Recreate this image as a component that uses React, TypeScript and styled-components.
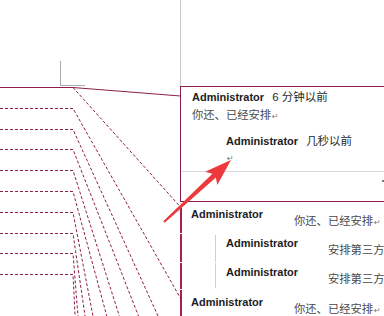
import React from "react";
import styled, { createGlobalStyle } from "styled-components";

const MAROON = "#8c1d4e";
const THREAD_RED = "#a8214f";

const Global = createGlobalStyle`
  html, body { margin: 0; padding: 0; background: #fff; }
  body { font-family: "Liberation Sans", "Noto Sans CJK SC", sans-serif; }
`;

const Screen = styled.div`
  position: relative;
  width: 384px;
  height: 316px;
  overflow: hidden;
  background: #fff;
  display: flex;
`;

const DocArea = styled.div`
  width: 180px;
  flex: none;
  box-sizing: border-box;
  padding: 61px 0 0 60px;
  display: flex;
  flex-direction: column;
`;

const CropMark = styled.div`
  width: 25px;
  height: 25px;
  box-sizing: border-box;
  border-left: 1px solid #ababab;
  border-bottom: 1px solid #ababab;
`;

const Pane = styled.div`
  flex: 1;
  min-width: 0;
  display: flex;
  flex-direction: column;
`;

const MarginGap = styled.div`
  height: 86px;
  flex: none;
  border-left: 1px solid #c9c9c9;
`;

const Balloon = styled.div`
  height: 116px;
  flex: none;
  box-sizing: border-box;
  border: 1px solid ${MAROON};
  border-right: none;
  display: flex;
  flex-direction: column;
`;

const BalloonBody = styled.div`
  height: 85px;
  box-sizing: border-box;
  border-bottom: 1px solid #dadada;
  padding: 3px 0 0 11px;
  display: flex;
  flex-direction: column;
`;

const Line = styled.div<{ $mt?: number; $ml?: number }>`
  margin-top: ${(p) => p.$mt ?? 0}px;
  margin-left: ${(p) => p.$ml ?? 0}px;
  line-height: 14px;
  white-space: nowrap;
  display: flex;
  align-items: baseline;
`;

const Author = styled.span<{ $w?: number }>`
  font-family: "Liberation Sans", sans-serif;
  font-weight: bold;
  font-size: 11px;
  color: #1c1c1c;
  ${(p) => (p.$w ? `width: ${p.$w}px; flex: none;` : "")}
`;

const Meta = styled.span`
  font-family: "Liberation Sans", "Noto Sans CJK SC", sans-serif;
  font-size: 11.5px;
  color: #2a2a2a;
  margin-left: 8px;
`;

const Body = styled.span`
  font-family: "Noto Sans CJK SC", sans-serif;
  font-size: 11.3px;
  color: #4a4a4a;
`;

const Ret = styled.span`
  font-family: "DejaVu Sans", sans-serif;
  font-size: 8px;
  color: #777;
  margin-left: 1px;
`;

const BalloonFooter = styled.div`
  flex: 1;
  display: flex;
  justify-content: flex-end;
  align-items: flex-start;
`;

const MenuDot = styled.span`
  width: 2px;
  height: 2px;
  margin-top: 8px;
  background: #777;
`;

const Thread = styled.div`
  margin-top: 6px;
  display: flex;
  flex-direction: column;
  gap: 1px;
`;

const Row = styled.div<{ $h?: number; $pt: number; $reply?: boolean }>`
  ${(p) => (p.$h ? `height: ${p.$h}px;` : "flex: 1;")}
  flex-shrink: 0;
  box-sizing: border-box;
  border-left: 2px solid ${THREAD_RED};
  padding: ${(p) => p.$pt}px 0 0 ${(p) => (p.$reply ? 33 : 9)}px;
  display: flex;
  align-items: flex-start;
  white-space: nowrap;
`;

const Guide = styled.span<{ $top: number; $bottom: number }>`
  align-self: stretch;
  margin-top: ${(p) => p.$top}px;
  margin-bottom: ${(p) => p.$bottom}px;
  margin-right: 10px;
  border-left: 1px solid #cfcfcf;
`;

const RowAuthor = styled(Author)`
  line-height: 12px;
`;

const RowText = styled.span`
  margin-top: 5px;
  line-height: 14px;
  font-family: "Noto Sans CJK SC", sans-serif;
  font-size: 11.3px;
  color: #4a4a4a;
`;

const Overlay = styled.svg`
  position: absolute;
  left: 0;
  top: 0;
  pointer-events: none;
`;

const anchors: [number, number][] = [
  [108, 1.77],
  [129, 2.2],
  [149, 2.55],
  [170, 3.15],
  [191, 3.7],
  [212, 5.2],
  [233, 6.9],
  [253, 12.6],
  [274, 20],
];

function leader(y: number, s: number) {
  const xEnd = Math.min(181, 73 + (330 - y) / s);
  const yEnd = y + (xEnd - 73) * s;
  return `M0 ${y + 0.5} H73 L${xEnd.toFixed(1)} ${yEnd.toFixed(1)}`;
}

// red callout arrow: tail (165,221) -> tip (231,160)
function arrowPoints() {
  const tip = [231, 160];
  const tail = [164, 222];
  const len = Math.hypot(tip[0] - tail[0], tip[1] - tail[1]);
  const d = [(tip[0] - tail[0]) / len, (tip[1] - tail[1]) / len];
  const n = [-d[1], d[0]];
  const headLen = 27;
  const headHalf = 9;
  const base = [tip[0] - d[0] * headLen, tip[1] - d[1] * headLen];
  const neck = [base[0] + d[0] * 4, base[1] + d[1] * 4];
  const p = (c: number[], k: number) => `${(c[0] + n[0] * k).toFixed(1)},${(c[1] + n[1] * k).toFixed(1)}`;
  return [
    p(tail, -1),
    p(neck, -2.6),
    p(base, -headHalf),
    `${tip[0]},${tip[1]}`,
    p(base, headHalf),
    p(neck, 2.6),
    p(tail, 1),
  ].join(" ");
}

function Connectors() {
  return (
    <Overlay width={384} height={316} viewBox="0 0 384 316">
      <g fill="none" stroke={MAROON} strokeWidth={1}>
        <path d="M0 87.5 H73 L180.5 96" />
        <g strokeDasharray="3 2">
          <path d="M73 87.5 L180.5 207" />
          {anchors.map(([y, s]) => (
            <path key={y} d={leader(y, s)} />
          ))}
        </g>
      </g>
      <polygon fill="#ec3a3c" points={arrowPoints()} />
    </Overlay>
  );
}

export default function App() {
  return (
    <Screen>
      <Global />
      <DocArea>
        <CropMark />
      </DocArea>
      <Pane>
        <MarginGap />
        <Balloon>
          <BalloonBody>
            <Line>
              <Author>Administrator</Author>
              <Meta>6 分钟以前</Meta>
            </Line>
            <Line $mt={3}>
              <Body>你还、已经安排</Body>
              <Ret>↵</Ret>
            </Line>
            <Line $mt={10} $ml={34}>
              <Author>Administrator</Author>
              <Meta>几秒以前</Meta>
            </Line>
            <Line $ml={34} $mt={4}>
              <Ret>↵</Ret>
            </Line>
          </BalloonBody>
          <BalloonFooter>
            <MenuDot />
          </BalloonFooter>
        </Balloon>
        <Thread>
          <Row $h={25} $pt={0}>
            <RowAuthor $w={103}>Administrator</RowAuthor>
            <RowText>
              你还、已经安排<Ret>↵</Ret>
            </RowText>
          </Row>
          <Row $h={28} $pt={3} $reply>
            <Guide $top={-2} $bottom={0} />
            <RowAuthor $w={102}>Administrator</RowAuthor>
            <RowText>安排第三方</RowText>
          </Row>
          <Row $h={26} $pt={3} $reply>
            <Guide $top={-3} $bottom={1} />
            <RowAuthor $w={102}>Administrator</RowAuthor>
            <RowText>安排第三方</RowText>
          </Row>
          <Row $pt={6}>
            <RowAuthor $w={103}>Administrator</RowAuthor>
            <RowText>
              你还、已经安排<Ret>↵</Ret>
            </RowText>
          </Row>
        </Thread>
      </Pane>
      <Connectors />
    </Screen>
  );
}
